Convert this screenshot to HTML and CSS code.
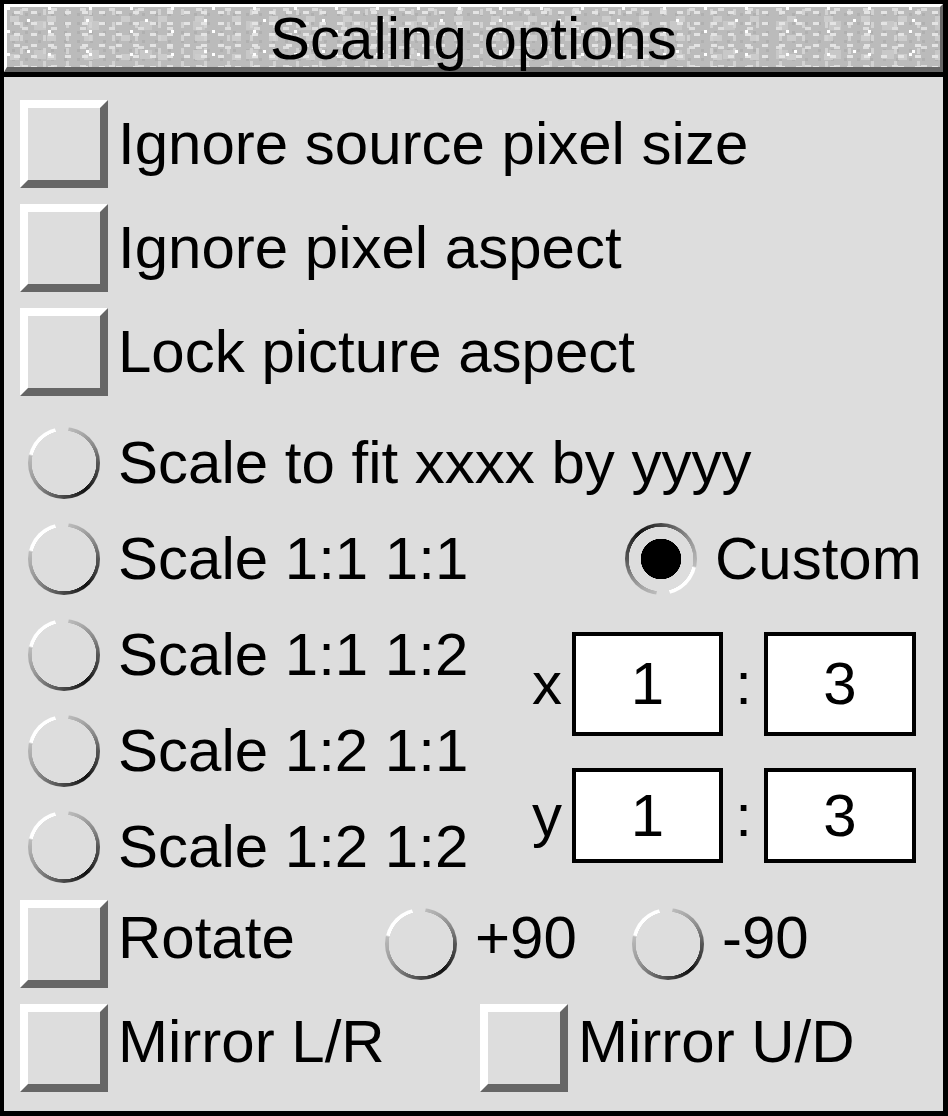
FILE: index.html
```html
<!DOCTYPE html>
<html lang="en">
  <head>
    <meta charset="UTF-8" />
    <title>Scaling options</title>
    <link rel="stylesheet" href="styles.css">
  </head>
  <body>
    <div class="window">
      <div class="title">Scaling options</div>

      <div class="panel">
        <div class="row">
          <span class="slot"><span class="check"></span></span>
          <span class="label">Ignore source pixel size</span>
        </div>
        <div class="row">
          <span class="slot"><span class="check"></span></span>
          <span class="label">Ignore pixel aspect</span>
        </div>
        <div class="row">
          <span class="slot"><span class="check"></span></span>
          <span class="label">Lock picture aspect</span>
        </div>

        <div class="radios">
          <div class="radio-row wide">
            <span class="slot"><span class="radio"></span></span>
            <span class="label">Scale to fit xxxx by yyyy</span>
          </div>
          <div class="radio-row left">
            <span class="slot"><span class="radio"></span></span>
            <span class="label">Scale 1:1 1:1</span>
          </div>
          <div class="radio-row custom">
            <span class="slot"><span class="radio on"></span></span>
            <span class="label">Custom</span>
          </div>
          <div class="radio-row left">
            <span class="slot"><span class="radio"></span></span>
            <span class="label">Scale 1:1 1:2</span>
          </div>
          <div class="ratio">
            <span class="axis">x</span>
            <span class="field">1</span>
            <span class="colon">:</span>
            <span class="field">3</span>
            <span class="axis">y</span>
            <span class="field">1</span>
            <span class="colon">:</span>
            <span class="field">3</span>
          </div>
          <div class="radio-row left">
            <span class="slot"><span class="radio"></span></span>
            <span class="label">Scale 1:2 1:1</span>
          </div>
          <div class="radio-row left">
            <span class="slot"><span class="radio"></span></span>
            <span class="label">Scale 1:2 1:2</span>
          </div>
        </div>

        <div class="row low">
          <div class="opt rotate">
            <span class="slot"><span class="check"></span></span>
            <span class="label">Rotate</span>
          </div>
          <div class="opt plus">
            <span class="slot"><span class="radio"></span></span>
            <span class="label">+90</span>
          </div>
          <div class="opt">
            <span class="slot"><span class="radio"></span></span>
            <span class="label">-90</span>
          </div>
        </div>

        <div class="row low">
          <div class="opt mirror">
            <span class="slot"><span class="check"></span></span>
            <span class="label">Mirror L/R</span>
          </div>
          <div class="opt">
            <span class="slot"><span class="check"></span></span>
            <span class="label">Mirror U/D</span>
          </div>
        </div>
      </div>
    </div>
  </body>
</html>
```

FILE: styles.css
```css
/* Reset */
* {
  margin: 0;
  padding: 0;
  box-sizing: border-box;
}

body {
  font-family: "Liberation Sans", Arial, sans-serif;
  font-size: 60px;
  color: #000;
  background: #000;
}

/* Window frame */
.window {
  width: 948px;
  height: 1116px;
  border-style: solid;
  border-color: #000;
  border-width: 4px 5px 5px 4px;
  display: flex;
  flex-direction: column;
  background: #dddddd;
}

/* Title bar - speckled grey like the desktop sprite */
.title {
  height: 68px;
  padding-top: 2px;
  line-height: 60px;
  text-align: center;
  border-style: solid;
  border-width: 3px 3px 5px 3px;
  border-color: #fff #666 #666 #fff;
  background-color: #bbbbbb;
  background-image:
    conic-gradient(at 3px 3px, transparent 75%, #fff 0),
    conic-gradient(at 3px 3px, transparent 75%, #fff 0),
    conic-gradient(at 6px 3px, transparent 75%, #e4e4e4 0),
    conic-gradient(at 6px 3px, transparent 75%, #dddddd 0),
    conic-gradient(at 3px 6px, transparent 75%, #d2d2d2 0),
    conic-gradient(at 9px 6px, transparent 75%, #cccccc 0),
    conic-gradient(at 12px 9px, transparent 75%, #c8c8c8 0),
    conic-gradient(at 3px 3px, transparent 75%, #b0b0b0 0);
  background-size: 41px 23px, 59px 31px, 17px 11px, 29px 19px, 23px 13px,
    37px 19px, 53px 29px, 13px 9px;
  background-position: 0 0, 20px 12px, 7px 4px, 15px 1px, 13px 2px, 3px 9px,
    27px 14px, 5px 6px;
}

/* Panel */
.panel {
  flex: 1;
  border-top: 5px solid #000;
  padding: 23px 16px 0;
  display: flex;
  flex-direction: column;
  gap: 16px;
}

.row,
.opt,
.radio-row {
  display: flex;
  align-items: flex-start;
  white-space: nowrap;
}

.row {
  height: 88px;
  line-height: 88px;
}

.row.low .label {
  line-height: 76px;
}

.slot {
  width: 88px;
  height: 88px;
  flex: none;
  display: flex;
  align-items: center;
  justify-content: center;
  margin-right: 10px;
}

/* Option icons */
.check {
  width: 88px;
  height: 88px;
  border-style: solid;
  border-width: 8px;
  border-color: #fff #666 #666 #fff;
  background: #dddddd;
}

.radio {
  width: 72px;
  height: 72px;
  border-radius: 50%;
  background:
    radial-gradient(circle closest-side, #dddddd calc(100% - 4px), transparent calc(100% - 3.5px)),
    conic-gradient(
      #dddddd 0deg 7deg,
      #bbb 8deg,
      #aaa 30deg,
      #888 60deg,
      #555 90deg,
      #333 120deg,
      #111 140deg,
      #333 165deg,
      #555 190deg,
      #777 215deg,
      #999 240deg,
      #aaa 260deg,
      #bbb 282deg,
      #fff 285deg 345deg,
      #dddddd 346deg
    );
}

.radio.on {
  background:
    radial-gradient(circle closest-side, #000 20px, transparent 20.5px),
    radial-gradient(circle closest-side, #dddddd calc(100% - 4px), transparent calc(100% - 3.5px)),
    conic-gradient(
      from 180deg,
      #dddddd 0deg 7deg,
      #bbb 8deg,
      #aaa 30deg,
      #888 60deg,
      #555 90deg,
      #333 120deg,
      #111 140deg,
      #333 165deg,
      #555 190deg,
      #777 215deg,
      #999 240deg,
      #aaa 260deg,
      #bbb 282deg,
      #fff 285deg 345deg,
      #dddddd 346deg
    );
}

/* Radio group */
.radios {
  display: grid;
  grid-template-columns: 512px 1fr;
  grid-auto-rows: 96px;
  margin: 3px 0 -11px;
}

.radio-row {
  height: 96px;
  line-height: 96px;
  align-items: center;
}

.radio-row.wide {
  grid-column: 1 / 3;
}

.radio-row.left {
  grid-column: 1;
}

.radio-row.custom {
  grid-column: 2;
  grid-row: 2;
  padding-left: 85px;
}

/* Custom ratio fields */
.ratio {
  grid-column: 2;
  grid-row: 3 / 6;
  margin-top: 25px;
  display: grid;
  grid-template-columns: 40px 151px 41px 152px;
  grid-template-rows: 104px 95px;
  row-gap: 32px;
  align-content: start;
}

.ratio > span:nth-child(-n + 4) {
  line-height: 96px;
  padding-top: 4px;
}

.ratio > span:nth-child(n + 5) {
  line-height: 87px;
  padding-top: 4px;
}

.colon {
  text-align: center;
}

.field {
  border: 4px solid #000;
  background: #fff;
  text-align: center;
  padding-top: 0 !important;
}

/* Bottom rows */
.opt.rotate {
  width: 357px;
}

.opt.plus {
  width: 247px;
}

.opt.mirror {
  width: 460px;
}
```
